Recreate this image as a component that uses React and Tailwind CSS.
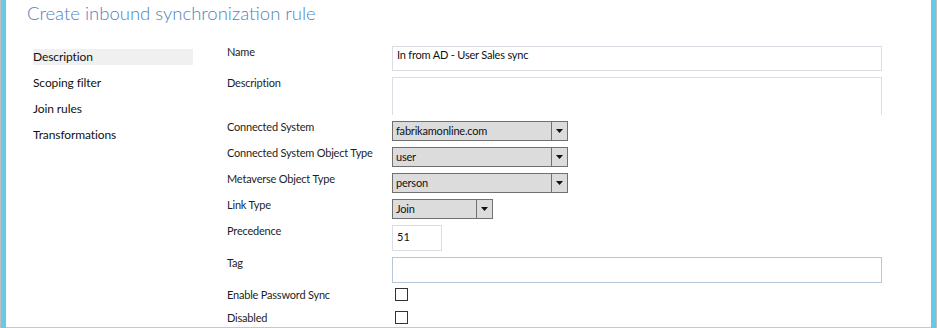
import React from 'react';

const font = { fontFamily: 'Lato, "Open Sans", "Liberation Sans", sans-serif' };

const NavItem = ({ label, active }) => (
    <div className={`h-[16px] flex items-center text-[12px] tracking-[-0.1px] leading-[16px] text-[#111] ${active ? 'bg-[#f0f0f0]' : ''}`}>
        {label}
    </div>
);

const Label = ({ children }) => (
    <div className="w-[165px] shrink-0 whitespace-nowrap text-[11px] tracking-[-0.2px] leading-[16px] text-[#1e1e1e] -mt-[2px]">{children}</div>
);

const Select = ({ value, width }) => (
    <div className={`${width} h-[20px] flex border border-[#707070] bg-[#dcdcdc]`}>
        <div className="flex-1 pl-[3px] text-[11px] tracking-[-0.2px] leading-[18px] text-[#111]">{value}</div>
        <div className="w-[16px] border-l border-[#707070] flex items-center justify-center">
            <svg width="7" height="4" viewBox="0 0 7 4">
                <path d="M0 0 H7 L3.5 4 Z" fill="#111" />
            </svg>
        </div>
    </div>
);

const Checkbox = () => (
    <div className="ml-[3px] -mt-[1px] w-[13px] h-[13px] border border-[#333] bg-white" />
);

const App = () => {
    return (
        <div className="w-[937px] h-[328px] flex bg-white overflow-hidden" style={font}>
            <div className="w-[1px] bg-[#c0c0c0]" />
            <div className="w-[5px] bg-[#68c8e8]" />

            <div className="flex-1 flex flex-col border-b border-[#c8c8c8]">
                <h1 className="shrink-0 pl-[21px] h-[46px] pt-[1px] text-[18.5px] leading-[24px] font-light text-[#4f82c0]">
                    Create inbound synchronization rule
                </h1>

                <div className="flex shrink-0">
                    <div className="pl-[27px] w-[187px] shrink-0 mt-[3px] flex flex-col gap-[10px]">
                        <NavItem label="Description" active />
                        <NavItem label="Scoping filter" />
                        <NavItem label="Join rules" />
                        <NavItem label="Transformations" />
                    </div>

                    <div className="ml-[34px] flex flex-col">
                        <div className="flex items-start">
                            <Label>Name</Label>
                            <div className="w-[490px] h-[25px] border border-[#dcdce4] pl-[4px] text-[11px] tracking-[-0.2px] leading-[14px] pt-[1px] text-[#111]">
                                In from AD - User Sales sync
                            </div>
                        </div>
                        <div className="flex items-start mt-[6px]">
                            <Label>Description</Label>
                            <div className="w-[490px] h-[38px] border border-b-0 border-[#dcdce4]" />
                        </div>
                        <div className="flex items-start mt-[6px]">
                            <Label>Connected System</Label>
                            <Select value="fabrikamonline.com" width="w-[176px]" />
                        </div>
                        <div className="flex items-start mt-[6px]">
                            <Label>Connected System Object Type</Label>
                            <Select value="user" width="w-[176px]" />
                        </div>
                        <div className="flex items-start mt-[6px]">
                            <Label>Metaverse Object Type</Label>
                            <Select value="person" width="w-[176px]" />
                        </div>
                        <div className="flex items-start mt-[6px]">
                            <Label>Link Type</Label>
                            <Select value="Join" width="w-[101px]" />
                        </div>
                        <div className="flex items-start mt-[6px]">
                            <Label>Precedence</Label>
                            <div className="w-[50px] h-[26px] border border-[#dcdce4] pl-[4px] text-[11px] leading-[14px] pt-[4px] text-[#111]">
                                51
                            </div>
                        </div>
                        <div className="flex items-start mt-[6px]">
                            <Label>Tag</Label>
                            <div className="w-[490px] h-[26px] border border-[#b6c8d8]" />
                        </div>
                        <div className="flex items-start mt-[6px]">
                            <Label>Enable Password Sync</Label>
                            <Checkbox />
                        </div>
                        <div className="flex items-start mt-[9px]">
                            <Label>Disabled</Label>
                            <Checkbox />
                        </div>
                    </div>
                </div>
            </div>

            <div className="w-[5px] bg-[#68c8e8]" />
            <div className="w-[1px] bg-[#c0c0c0]" />
        </div>
    );
};

export default App;
